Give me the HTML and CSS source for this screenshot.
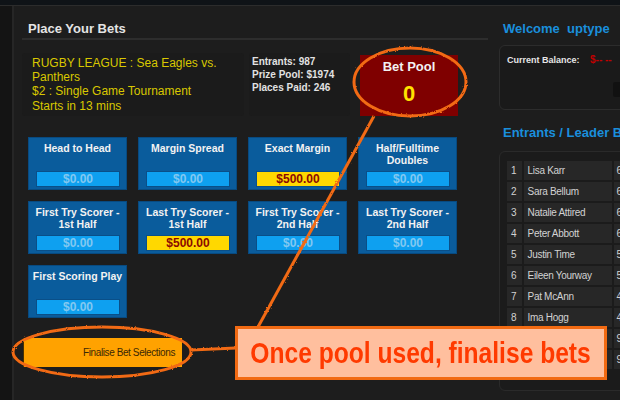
FILE: index.html
```html
<!DOCTYPE html>
<html lang="en">
<head>
<meta charset="utf-8">
<title>Place Your Bets</title>
<link rel="stylesheet" href="styles.css">
</head>
<body>
<div class="topbar"></div>
<div class="layout">
  <div class="rail"></div>
  <main class="bets">
    <h1 class="section-title">Place Your Bets</h1>
    <div class="info-row">
      <div class="event">
        RUGBY LEAGUE : Sea Eagles vs. Panthers<br>
        $2 : Single Game Tournament<br>
        Starts in 13 mins
      </div>
      <div class="stats">
        Entrants: 987<br>
        Prize Pool: $1974<br>
        Places Paid: 246
      </div>
      <div class="pool">
        <div class="pool-label">Bet Pool</div>
        <div class="pool-value">0</div>
      </div>
    </div>
    <div class="markets">
      <div class="market"><div class="market-name">Head to Head</div><div class="amount">$0.00</div></div>
      <div class="market"><div class="market-name">Margin Spread</div><div class="amount">$0.00</div></div>
      <div class="market"><div class="market-name">Exact Margin</div><div class="amount amount-set">$500.00</div></div>
      <div class="market"><div class="market-name">Half/Fulltime Doubles</div><div class="amount">$0.00</div></div>
      <div class="market"><div class="market-name">First Try Scorer - 1st Half</div><div class="amount">$0.00</div></div>
      <div class="market"><div class="market-name">Last Try Scorer - 1st Half</div><div class="amount amount-set">$500.00</div></div>
      <div class="market"><div class="market-name">First Try Scorer - 2nd Half</div><div class="amount">$0.00</div></div>
      <div class="market"><div class="market-name">Last Try Scorer - 2nd Half</div><div class="amount">$0.00</div></div>
      <div class="market"><div class="market-name">First Scoring Play</div><div class="amount">$0.00</div></div>
    </div>
    <button class="finalise">Finalise Bet Selections</button>
  </main>
  <aside class="side">
    <h2 class="side-title">Welcome&nbsp; uptype</h2>
    <div class="balance">
      <div class="balance-row"><span class="balance-label">Current Balance:</span><span class="balance-value">$-- --</span></div>
      <div class="balance-btn"></div>
    </div>
    <h2 class="side-title leader-title">Entrants / Leader Board</h2>
    <div class="leader">
      <table class="leader-table">
        <tr><td class="pos">1</td><td class="name">Lisa Karr</td><td class="pts">650</td></tr>
        <tr><td class="pos">2</td><td class="name">Sara Bellum</td><td class="pts">640</td></tr>
        <tr><td class="pos">3</td><td class="name">Natalie Attired</td><td class="pts">620</td></tr>
        <tr><td class="pos">4</td><td class="name">Peter Abbott</td><td class="pts">600</td></tr>
        <tr><td class="pos">5</td><td class="name">Justin Time</td><td class="pts">580</td></tr>
        <tr><td class="pos">6</td><td class="name">Eileen Yourway</td><td class="pts">550</td></tr>
        <tr><td class="pos">7</td><td class="name">Pat McAnn</td><td class="pts">480</td></tr>
        <tr><td class="pos">8</td><td class="name">Ima Hogg</td><td class="pts">450</td></tr>
        <tr><td class="pos">9</td><td class="name">Anita Bath</td><td class="pts">90</td></tr>
        <tr><td class="pos">10</td><td class="name">Al Dente</td><td class="pts">90</td></tr>
      </table>
    </div>
  </aside>
</div>

<svg class="annotations" width="620" height="400" viewBox="0 0 620 400" aria-hidden="true">
  <defs>
    <filter id="rough" x="-10%" y="-10%" width="120%" height="120%">
      <feTurbulence type="fractalNoise" baseFrequency="0.8" numOctaves="1" seed="3" result="n"/>
      <feDisplacementMap in="SourceGraphic" in2="n" scale="2.5"/>
    </filter>
  </defs>
  <g fill="none" stroke="#f26a12" stroke-width="3" filter="url(#rough)">
    <ellipse cx="410" cy="82" rx="56" ry="34"/>
    <line x1="374" y1="116" x2="258" y2="327"/>
    <ellipse cx="102" cy="352" rx="89" ry="25"/>
    <line x1="191" y1="350" x2="236" y2="348"/>
  </g>
</svg>
<div class="callout"><span class="callout-text">Once pool used, finalise bets</span></div>
</body>
</html>
```

FILE: styles.css
```css
* { box-sizing: border-box; }

html, body {
  margin: 0;
  padding: 0;
}

body {
  width: 620px;
  height: 400px;
  overflow: hidden;
  position: relative;
  background: #1d1d1d;
  font-family: "Liberation Sans", Arial, sans-serif;
  color: #e0e0e0;
}

.topbar {
  height: 5px;
  background: #0f1317;
}

.layout {
  display: flex;
  height: 395px;
  border-top: 1px solid #2c2c2c;
}

.rail {
  flex: none;
  width: 14px;
  background: #141414;
  border-right: 2px solid #262626;
}

.bets {
  flex: none;
  width: 476px;
  padding: 0 2px 0 8px;
  background: #1d1d1d;
}

.section-title {
  margin: 0;
  padding: 15px 0 2px 6px;
  font-size: 13px;
  line-height: 15px;
  font-weight: bold;
  color: #e4e4e4;
  border-bottom: 2px solid #2d2d2d;
}

.info-row {
  display: flex;
  margin-top: 13px;
  height: 63px;
}

.event {
  flex: none;
  width: 222px;
  padding: 3px 0 0 10px;
  font-size: 12px;
  line-height: 14.2px;
  color: #d9c800;
  background: #1b1b1b;
  border-radius: 3px;
}

.stats {
  flex: none;
  width: 101px;
  margin-left: 5px;
  padding: 2px 0 0 3px;
  font-size: 10px;
  line-height: 13px;
  font-weight: bold;
  color: #e2e2e2;
  background: #1b1b1b;
  border-radius: 3px;
}

.pool {
  flex: none;
  width: 98px;
  height: 61px;
  margin: 2px 0 0 10px;
  padding-top: 4px;
  background: #7f0000;
  text-align: center;
}

.pool-label {
  font-size: 13px;
  line-height: 15px;
  font-weight: bold;
  color: #f2f2f2;
}

.pool-value {
  margin-top: 7px;
  font-size: 22px;
  line-height: 26px;
  font-weight: bold;
  color: #ffe200;
}

.markets {
  display: grid;
  grid-template-columns: repeat(4, 99px);
  grid-auto-rows: 53px;
  gap: 11px;
  margin: 21px 0 0 6px;
}

.market {
  display: flex;
  flex-direction: column;
  justify-content: space-between;
  padding: 4px 0 0;
  background: #0a5c9c;
  border: 1px solid #084a80;
  text-align: center;
}

.market-name {
  font-size: 10.5px;
  line-height: 12px;
  font-weight: bold;
  color: #f2f2f2;
}

.amount {
  margin: 0 6px 2px 7px;
  height: 16px;
  line-height: 14px;
  font-size: 12px;
  font-weight: bold;
  color: #82c8f0;
  background: #0ea0f0;
  border: 1px solid #0a4f88;
}

.amount-set {
  background: #ffd800;
  color: #8b0a00;
}

.finalise {
  display: block;
  width: 159px;
  height: 29px;
  margin: 20px 0 0 1px;
  padding: 0 7px 0 0;
  border: 0;
  border-left: 1px solid #4a3200;
  background: #ffa200;
  font-family: "Liberation Sans", Arial, sans-serif;
  font-size: 10px;
  letter-spacing: -0.4px;
  color: #3a2806;
  text-align: right;
}

.side {
  flex: none;
  width: 130px;
  padding: 15px 0 0 9px;
}

.side-title {
  margin: 0 0 0 4px;
  font-size: 13px;
  line-height: 15px;
  font-weight: bold;
  color: #1a8fdc;
  white-space: nowrap;
}

.balance {
  width: 160px;
  margin-top: 9px;
  height: 65px;
  padding: 8px 0 0 7px;
  background: #1a1a1a;
  border: 1px solid #2c2c2c;
  border-radius: 6px;
}

.balance-row {
  display: flex;
  font-size: 9px;
  line-height: 12px;
  font-weight: bold;
}

.balance-label {
  width: 83px;
  color: #e6e6e6;
}

.balance-value {
  font-size: 10px;
  color: #c00000;
}

.balance-btn {
  width: 40px;
  height: 15px;
  margin: 16px 0 0 106px;
  background: #111111;
  border-radius: 2px;
}

.leader-title {
  margin-top: 15px;
}

.leader {
  width: 160px;
  margin-top: 11px;
  height: 240px;
  padding: 7px 0 0 5px;
  background: #1b1b1b;
  border: 1px solid #2a2a2a;
  border-radius: 6px;
}

.leader-table {
  border-collapse: separate;
  border-spacing: 2px 2px;
  font-size: 10px;
  letter-spacing: -0.3px;
  color: #d2d2d2;
}

.leader-table td {
  height: 19px;
  padding: 0;
  line-height: 19px;
  background: #272727;
  white-space: nowrap;
}

.leader-table .pos {
  width: 14px;
  padding-left: 4px;
}

.leader-table .name {
  width: 88px;
  padding-left: 4px;
}

.leader-table .pts {
  width: 40px;
  padding-left: 3px;
}

.annotations {
  position: absolute;
  left: 0;
  top: 0;
  pointer-events: none;
}

.callout {
  position: absolute;
  left: 235px;
  top: 326px;
  width: 372px;
  height: 54px;
  display: flex;
  align-items: center;
  justify-content: center;
  background: #ffbf9e;
  border: 3px solid #f26a12;
  overflow: hidden;
}

.callout-text {
  display: inline-block;
  font-family: "Liberation Sans", Arial, sans-serif;
  font-weight: bold;
  font-size: 30px;
  line-height: 34px;
  color: #ff3a00;
  white-space: nowrap;
  transform: scaleX(0.82);
}
```
